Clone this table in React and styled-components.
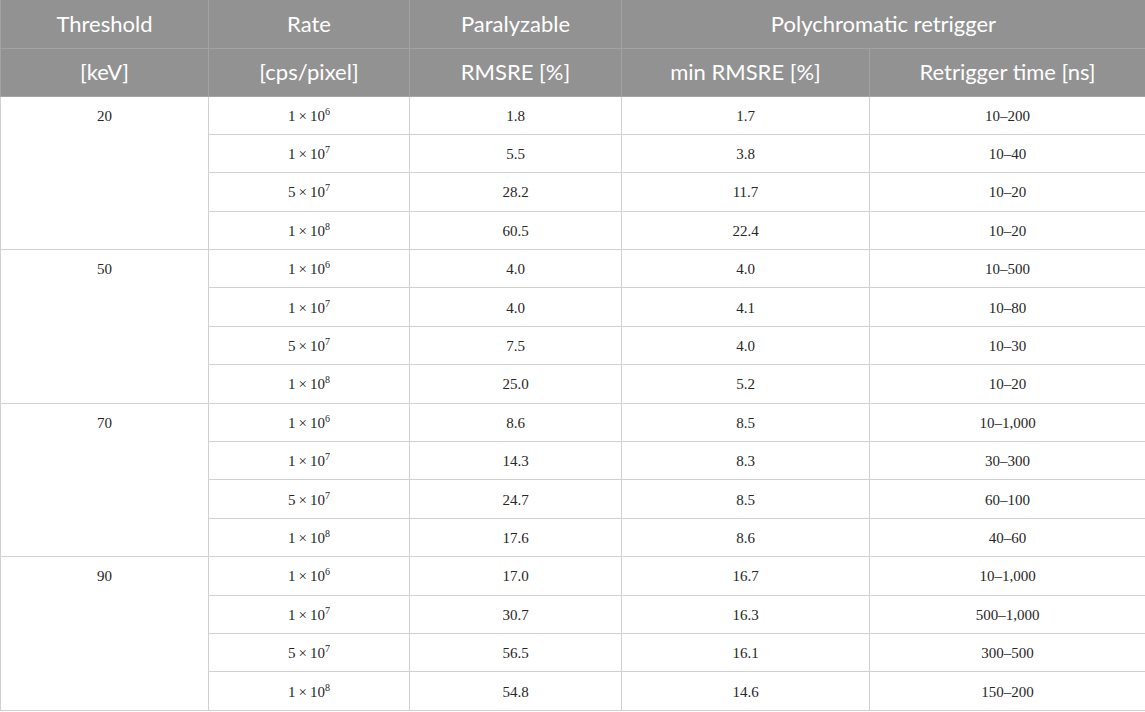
import React from "react";
import styled, { createGlobalStyle } from "styled-components";

const Global = createGlobalStyle`
  html, body { margin: 0; padding: 0; background: #fff; }
`;

const Table = styled.table`
  width: 1145px;
  border-collapse: collapse;
  table-layout: fixed;
  border: 1px solid #c8c8c8;
  border-top: none;
`;

const HeadRow = styled.tr`
  height: 48px;
`;

const HeadCell = styled.th`
  background: #929292;
  color: #fff;
  font-family: Lato, "Open Sans", sans-serif;
  font-weight: 400;
  font-size: 22px;
  line-height: 26px;
  padding: 0 8px;
  text-align: center;
  vertical-align: middle;
  border: 1px solid #a3a3a3;
  border-top: none;
`;

const Row = styled.tr`
  height: 38.4px;
`;

const Cell = styled.td`
  box-sizing: border-box;
  font-family: "Liberation Serif", "Times New Roman", serif;
  font-size: 15px;
  line-height: 18px;
  color: #262626;
  text-align: center;
  vertical-align: ${(p) => (p.$top ? "top" : "middle")};
  padding: ${(p) => (p.$top ? "10px 8px 0" : "1px 8px 0")};
  border: 1px solid #d0d0d0;
`;

const Sup = styled.sup`
  font-size: 10px;
  vertical-align: 6px;
  line-height: 0;
`;

const groups = [
  {
    t: "20",
    rows: [
      ["1", "6", "1.8", "1.7", "10–200"],
      ["1", "7", "5.5", "3.8", "10–40"],
      ["5", "7", "28.2", "11.7", "10–20"],
      ["1", "8", "60.5", "22.4", "10–20"],
    ],
  },
  {
    t: "50",
    rows: [
      ["1", "6", "4.0", "4.0", "10–500"],
      ["1", "7", "4.0", "4.1", "10–80"],
      ["5", "7", "7.5", "4.0", "10–30"],
      ["1", "8", "25.0", "5.2", "10–20"],
    ],
  },
  {
    t: "70",
    rows: [
      ["1", "6", "8.6", "8.5", "10–1,000"],
      ["1", "7", "14.3", "8.3", "30–300"],
      ["5", "7", "24.7", "8.5", "60–100"],
      ["1", "8", "17.6", "8.6", "40–60"],
    ],
  },
  {
    t: "90",
    rows: [
      ["1", "6", "17.0", "16.7", "10–1,000"],
      ["1", "7", "30.7", "16.3", "500–1,000"],
      ["5", "7", "56.5", "16.1", "300–500"],
      ["1", "8", "54.8", "14.6", "150–200"],
    ],
  },
];

export default function App() {
  return (
    <>
      <Global />
      <Table>
        <colgroup>
          <col style={{ width: 208 }} />
          <col style={{ width: 201 }} />
          <col style={{ width: 212 }} />
          <col style={{ width: 248 }} />
          <col style={{ width: 276 }} />
        </colgroup>
        <thead>
          <HeadRow>
            <HeadCell>Threshold</HeadCell>
            <HeadCell>Rate</HeadCell>
            <HeadCell>Paralyzable</HeadCell>
            <HeadCell colSpan={2}>Polychromatic retrigger</HeadCell>
          </HeadRow>
          <HeadRow>
            <HeadCell>[keV]</HeadCell>
            <HeadCell>[cps/pixel]</HeadCell>
            <HeadCell>RMSRE [%]</HeadCell>
            <HeadCell>min RMSRE [%]</HeadCell>
            <HeadCell>Retrigger time [ns]</HeadCell>
          </HeadRow>
        </thead>
        <tbody>
          {groups.map((g) =>
            g.rows.map((r, i) => (
              <Row key={g.t + i}>
                {i === 0 && (
                  <Cell $top rowSpan={4}>
                    {g.t}
                  </Cell>
                )}
                <Cell>
                  {r[0]}&#8201;×&#8201;10<Sup>{r[1]}</Sup>
                </Cell>
                <Cell>{r[2]}</Cell>
                <Cell>{r[3]}</Cell>
                <Cell>{r[4]}</Cell>
              </Row>
            ))
          )}
        </tbody>
      </Table>
    </>
  );
}
